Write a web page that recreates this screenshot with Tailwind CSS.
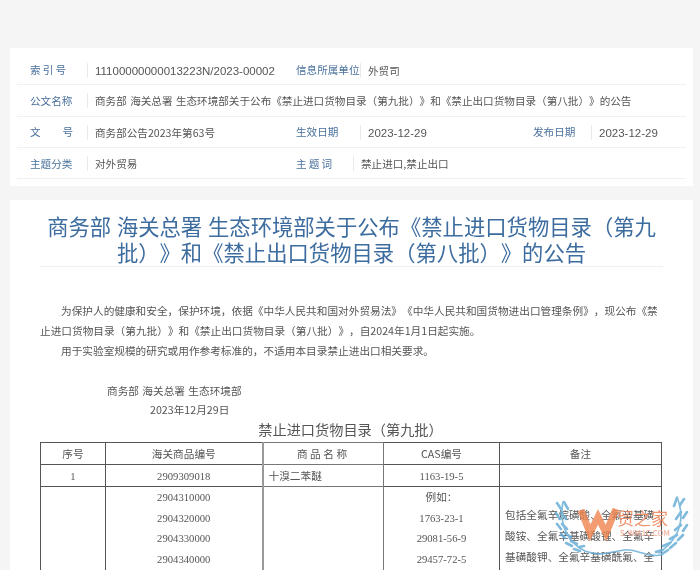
<!DOCTYPE html>
<html lang="zh-CN"><head><meta charset="utf-8">
<script src="https://cdn.jsdelivr.net/npm/@tailwindcss/browser@4"></script>
</head>
<body class="w-[700px] h-[570px] overflow-hidden bg-[#f5f5f5] font-['Noto_Sans_CJK_SC','Liberation_Sans',sans-serif] relative [text-spacing-trim:space-all] [word-spacing:1px]">
<div class="pt-12 pl-[10px] w-[693px] blur-[0.3px]">
  <section class="bg-white h-[138px] px-[7px] pt-[6px] text-[10.6px] text-[#555]">
    <div class="h-[31px] pt-[2px] border-b border-[#f0f0f0] flex items-center">
      <span class="w-[70px] pl-[13px] shrink-0 text-[#4a719c] tracking-[2.2px]">索引号</span><span class="h-[15px] leading-[17px] border-l border-[#eaeaea] pl-[7px] w-[209px] shrink-0 text-[11.5px] font-['Liberation_Sans']">11100000000013223N/2023-00002</span>
      <span class="w-[64px] shrink-0 text-[#4a719c]">信息所属单位</span><span class="h-[15px] leading-[15px] border-l border-[#eaeaea] pl-[7px]">外贸司</span>
    </div>
    <div class="h-[32px] border-b border-[#f0f0f0] flex items-center">
      <span class="w-[70px] pl-[13px] shrink-0 text-[#4a719c]">公文名称</span><span class="h-[15px] leading-[15px] border-l border-[#eaeaea] pl-[7px]">商务部 海关总署 生态环境部关于公布《禁止进口货物目录（第九批）》和《禁止出口货物目录（第八批）》的公告</span>
    </div>
    <div class="h-[31px] border-b border-[#f0f0f0] flex items-center">
      <span class="w-[70px] pl-[13px] shrink-0 text-[#4a719c] flex justify-between pr-[14px]"><i class="not-italic">文</i><i class="not-italic">号</i></span><span class="h-[15px] leading-[15px] border-l border-[#eaeaea] pl-[7px] w-[209px] shrink-0">商务部公告2023年第63号</span>
      <span class="w-[64px] shrink-0 text-[#4a719c]">生效日期</span><span class="h-[15px] leading-[17px] border-l border-[#eaeaea] pl-[7px] w-[173px] shrink-0 text-[11.5px] font-['Liberation_Sans']">2023-12-29</span>
      <span class="w-[58px] shrink-0 text-[#4a719c]">发布日期</span><span class="h-[15px] leading-[17px] border-l border-[#eaeaea] pl-[7px] text-[11.5px] font-['Liberation_Sans']">2023-12-29</span>
    </div>
    <div class="h-[31px] pt-[1px] border-b border-[#f0f0f0] flex items-center">
      <span class="w-[70px] pl-[13px] shrink-0 text-[#4a719c]">主题分类</span><span class="h-[15px] leading-[15px] border-l border-[#eaeaea] pl-[7px] w-[209px] shrink-0">对外贸易</span>
      <span class="w-[57px] shrink-0 text-[#4a719c] tracking-[2.2px]">主题词</span><span class="h-[15px] leading-[15px] border-l border-[#eaeaea] pl-[7px]">禁止进口,禁止出口</span>
    </div>
  </section>
  <section class="bg-white mt-[14px] h-[400px] overflow-hidden px-[30px] pt-[13px] text-[#555]">
    <h1 class="text-[21.33px] leading-[26px] text-center text-[#3d6c9f] border-b border-[#f0f0f0] h-[54px]">商务部 海关总署 生态环境部关于公布《禁止进口货物目录（第九批）》和《禁止出口货物目录（第八批）》的公告</h1>
    <div class="mt-[34px] text-[10.67px] leading-[20px]">
      <p class="indent-[21px]">为保护人的健康和安全，保护环境，依据《中华人民共和国对外贸易法》《中华人民共和国货物进出口管理条例》，现公布《禁止进口货物目录（第九批）》和《禁止出口货物目录（第八批）》，自2024年1月1日起实施。</p>
      <p class="indent-[21px]">用于实验室规模的研究或用作参考标准的，不适用本目录禁止进出口相关要求。</p>
      <p class="mt-[20px] pl-[67px]">商务部 海关总署 生态环境部</p>
      <p class="pl-[110px] -mt-[1px]">2023年12月29日</p>
    </div>
    <h2 class="text-[14.2px] leading-[20px] text-center -mt-[1px] pr-[2px]">禁止进口货物目录（第九批）</h2>
    <table class="mt-[3px] w-[621px] table-fixed border-collapse text-[10.67px] text-[#555]">
      <colgroup><col class="w-[65px]"><col class="w-[157px]"><col class="w-[121px]"><col class="w-[116px]"><col class="w-[162px]"></colgroup>
      <tbody>
        <tr class="h-[22px] text-center">
          <td class="border border-[#555]">序号</td><td class="border border-[#555]">海关商品编号</td><td class="border border-[#777] border-l-2 border-l-[#999] tracking-[2.5px]">商品名称</td><td class="border border-[#555]">CAS编号</td><td class="border border-[#555]">备注</td>
        </tr>
        <tr class="h-[22px] text-center">
          <td class="border border-[#555] font-['Liberation_Serif']">1</td><td class="border border-[#555] font-['Liberation_Serif']">2909309018</td><td class="border border-[#777] border-l-2 border-l-[#999] text-left pl-[5px]">十溴二苯醚</td><td class="border border-[#555] font-['Liberation_Serif']">1163-19-5</td><td class="border border-[#555]"></td>
        </tr>
        <tr class="align-top h-[100px]">
          <td class="border border-[#555]"></td>
          <td class="border border-[#555] text-center font-['Liberation_Serif'] leading-[20.5px]">2904310000<br>2904320000<br>2904330000<br>2904340000</td>
          <td class="border border-[#777] border-l-2 border-l-[#999]"></td>
          <td class="border border-[#555] text-center font-['Liberation_Serif','Noto_Sans_CJK_SC'] leading-[20.5px]">例如：<br>1763-23-1<br>29081-56-9<br>29457-72-5</td>
          <td class="border border-[#555] px-[5px] pt-[17px] leading-[21px]">包括全氟辛烷磺酸、全氟辛基磺酸铵、全氟辛基磺酸锂、全氟辛基磺酸钾、全氟辛基磺酰氟、全</td>
        </tr>
      </tbody>
    </table>
  </section>
</div>
<svg class="absolute left-[552px] top-[492px] w-[140px] h-[78px]" viewBox="0 0 140 78" fill="none">
  <g stroke="#6aaed6" stroke-linecap="round" opacity=".85">
    <path d="M11 10 C7 30 14 50 33 59 C48 65 58 60 72 58 C86 56 92 66 110 63" stroke-width="1.6"/>
    <path d="M125 5 C134 28 128 46 107 61" stroke-width="1.6"/>
    <g stroke-width="2.6">
      <path d="M12 10l4 7M9 17l-4-6M9 21l5 6M8 27l-4-6M10 32l5 5M9 37l-4-5M13 41l6 4M13 46l-4-4M19 49l6 3M20 54l-6-3M27 55l5-1M28 59l-6-2"/>
      <path d="M125 6l-3 8M128 13l4-6M129 20l-5 7M131 26l4-6M129 33l-6 5M131 39l4-6M125 43l-7 4M126 48l5-5M118 51l-7 3M118 56l6-5M110 58l-6 2M110 62l6-4"/>
    </g>
  </g>
  <path d="M29 18 L38 41 L46 25 L54 41 L64 17" stroke="#f0834e" stroke-width="7" opacity=".8"/>
</svg>
<div class="absolute left-[617px] top-[508px] text-[#ee8a5e] text-[17px] leading-[20px] opacity-90">贸之家</div>
<div class="absolute left-[620px] top-[528px] text-[#f0a890] text-[8px] leading-[10px] [word-spacing:0]">S-WMJC.COM</div>
</body></html>
